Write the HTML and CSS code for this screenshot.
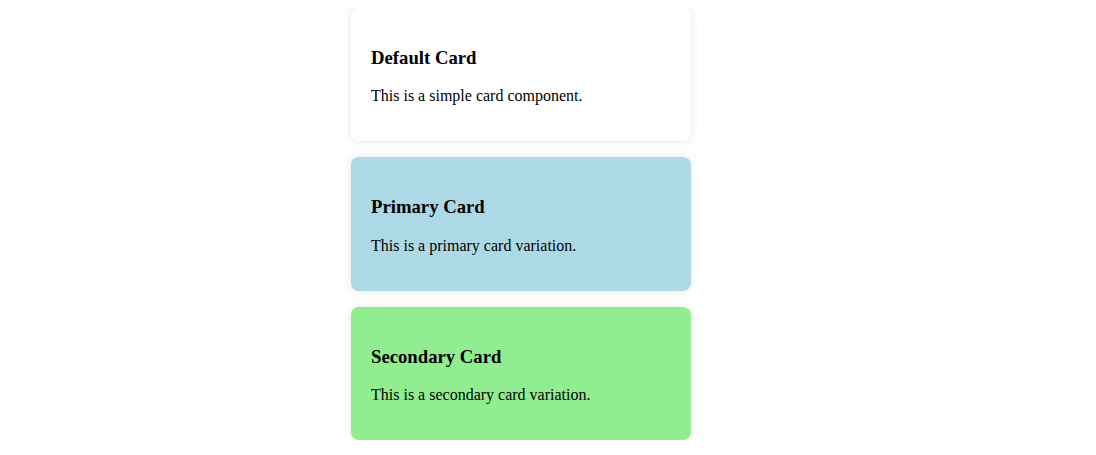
FILE: index.html
```html
<!DOCTYPE html>
<html>
<head>
<meta charset="utf-8">
<link rel="stylesheet" href="styles.css">
</head>
<body>
<div class="stack">
  <div class="card">
    <h3 class="card-title">Default Card</h3>
    <p class="card-text">This is a simple card component.</p>
  </div>
  <div class="card card-primary">
    <h3 class="card-title">Primary Card</h3>
    <p class="card-text">This is a primary card variation.</p>
  </div>
  <div class="card card-secondary">
    <h3 class="card-title">Secondary Card</h3>
    <p class="card-text">This is a secondary card variation.</p>
  </div>
</div>
</body>
</html>
```
FILE: styles.css
```css
body {
  margin: 8px;
  font-family: "Liberation Serif", "Times New Roman", serif;
  background: #ffffff;
  color: #000;
}
.stack {
  display: flex;
  flex-direction: column;
  gap: 16px;
  width: 340px;
  margin-left: 343px;
}
.card {
  background: #ffffff;
  border-radius: 8px;
  padding: 20px;
  box-shadow: 0 0 10px rgba(0, 0, 0, 0.1);
}
.card-primary {
  background: #add8e6;
}
.card-secondary {
  background: #90ee90;
}
.card-title {
  font-size: 1.17em;
  font-weight: bold;
  margin: 18.72px 0;
}
.card-text {
  font-size: 16px;
  margin: 16px 0;
}
```
